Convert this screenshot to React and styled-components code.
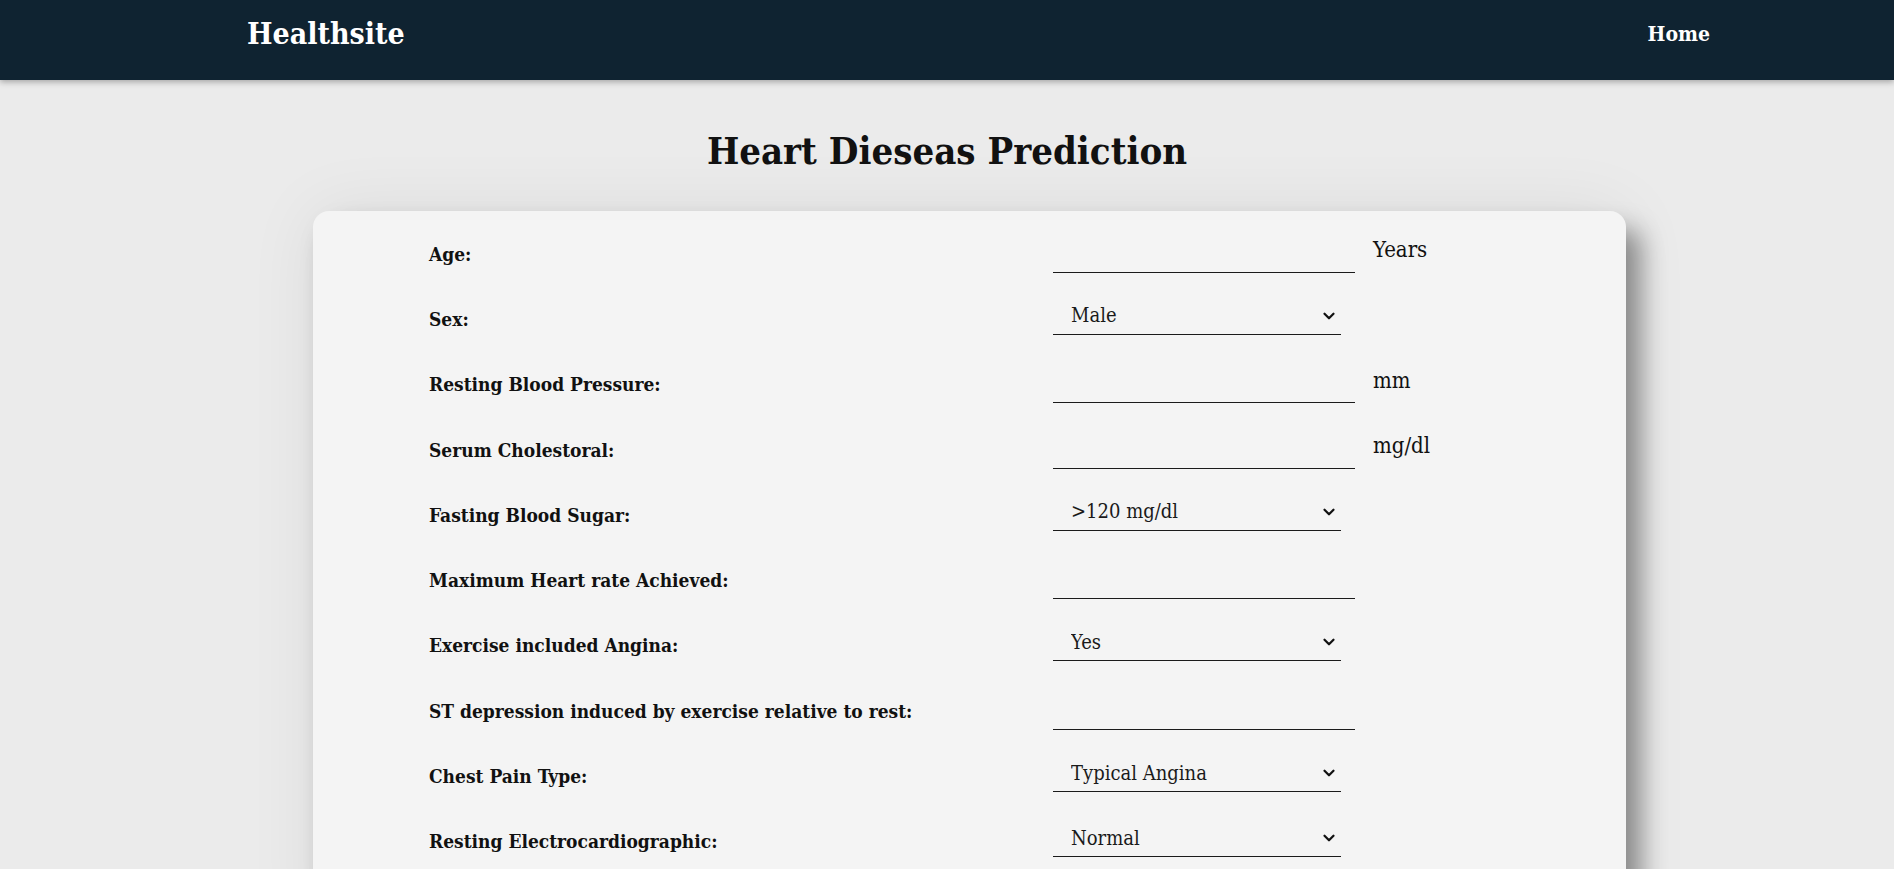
import React from "react";
import styled, { createGlobalStyle } from "styled-components";
import { ChevronDown } from "lucide-react";

const GlobalStyle = createGlobalStyle`
  body {
    margin: 0;
    background: #ebebeb;
    font-family: "DejaVu Serif Condensed", "DejaVu Serif", serif;
    color: #111;
  }
`

const Nav = styled.nav`
  height: 80px;
  background-color: #0f2331;
  display: flex;
  align-items: center;
  justify-content: space-between;
  padding: 0 184px 0 247px;
  box-shadow: 0 2px 6px rgba(0, 0, 0, 0.3);
`

const Brand = styled.div`
  color: #fff;
  font-size: 30px;
  font-weight: bold;
  margin-top: -14px;
`

const NavLink = styled.a`
  color: #fff;
  font-size: 21px;
  font-weight: bold;
  text-decoration: none;
  margin-top: -14px;
`

const Title = styled.h1`
  text-align: center;
  font-size: 38px;
  margin: 48px 0 38px;
`

const Card = styled.form`
  margin-left: 313px;
  width: 1313px;
  box-sizing: border-box;
  background: #f4f4f4;
  border-radius: 16px;
  padding: 10px 0 60px 116px;
  box-shadow: 15px 18px 26px rgba(0, 0, 0, 0.4), 0 0 70px rgba(0, 0, 0, 0.07);
`

const Row = styled.div`
  display: grid;
  grid-template-columns: 624px 302px auto;
  align-items: center;
  height: 65.3px;
`

const Label = styled.label`
  font-size: 19px;
  font-weight: bold;
`

const TextField = styled.input`
  width: 302px;
  height: 38px;
  box-sizing: border-box;
  border: none;
  border-bottom: 1px solid #1a1a1a;
  background: transparent;
  font: inherit;
  font-size: 20px;
  outline: none;
`

const SelectBox = styled.div`
  position: relative;
  width: 288px;
  height: 32px;
`

const Select = styled.select`
  appearance: none;
  width: 100%;
  height: 100%;
  box-sizing: border-box;
  border: none;
  border-bottom: 1px solid #1a1a1a;
  border-radius: 0;
  background: transparent;
  font-family: inherit;
  font-size: 20px;
  color: #1a1a1a;
  padding: 0 0 6px 18px;
  outline: none;
`

const Arrow = styled(ChevronDown)`
  position: absolute;
  right: 3px;
  top: 4px;
  pointer-events: none;
  color: #111;
`

const Unit = styled.span`
  font-size: 22px;
  margin: 0 0 8px 18px;
`

const fields = [
  { label: "Age:", type: "text", unit: "Years" },
  { label: "Sex:", type: "select", options: ["Male", "Female"] },
  { label: "Resting Blood Pressure:", type: "text", unit: "mm" },
  { label: "Serum Cholestoral:", type: "text", unit: "mg/dl" },
  { label: "Fasting Blood Sugar:", type: "select", options: [">120 mg/dl", "<120 mg/dl"] },
  { label: "Maximum Heart rate Achieved:", type: "text" },
  { label: "Exercise included Angina:", type: "select", options: ["Yes", "No"] },
  { label: "ST depression induced by exercise relative to rest:", type: "text" },
  { label: "Chest Pain Type:", type: "select", options: ["Typical Angina", "Atypical Angina", "Non-anginal Pain", "Asymptomatic"] },
  { label: "Resting Electrocardiographic:", type: "select", options: ["Normal", "ST-T Wave Abnormality", "Left Ventricular Hypertrophy"] },
]

const App = () => {
  return (
    <>
      <GlobalStyle />
      <Nav>
        <Brand>Healthsite</Brand>
        <NavLink href="#">Home</NavLink>
      </Nav>
      <Title>Heart Dieseas Prediction</Title>
      <Card onSubmit={e => e.preventDefault()}>
        {fields.map((f, i) => (
          <Row key={i}>
            <Label>{f.label}</Label>
            {f.type === "text" ? (
              <TextField type="text" />
            ) : (
              <SelectBox>
                <Select defaultValue={f.options[0]}>
                  {f.options.map(o => <option key={o}>{o}</option>)}
                </Select>
                <Arrow size={18} strokeWidth={3} />
              </SelectBox>
            )}
            {f.unit && <Unit>{f.unit}</Unit>}
          </Row>
        ))}
      </Card>
    </>
  );
}

export default App;
